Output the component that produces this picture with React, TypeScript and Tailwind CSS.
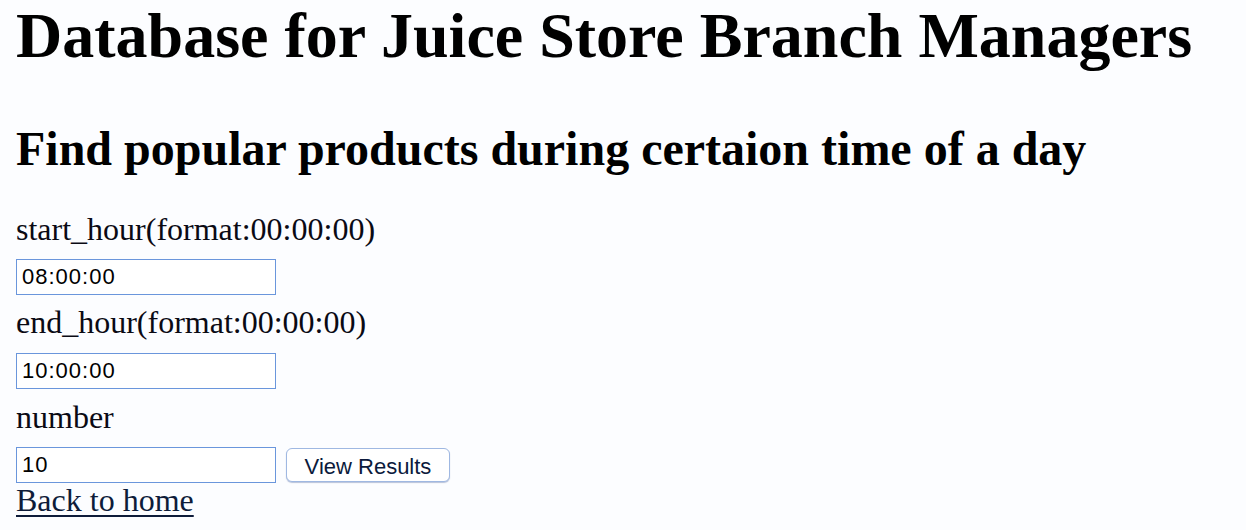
export default function App() {
  const serif = "font-['Liberation_Serif','Times_New_Roman',serif]";
  const sans = "font-['Liberation_Sans',Arial,sans-serif]";
  const field = `h-[36px] w-[260px] border border-[#6a96dc] bg-white px-[5px] text-[22px] tracking-[1px] text-black outline-none ${sans}`;

  return (
    <div className={`min-h-[530px] bg-[#fcfdff] px-4 text-black ${serif}`}>
      <h1 className="text-[64px] font-bold leading-[71px]">Database for Juice Store Branch Managers</h1>
      <h2 className="mt-[50px] text-[48px] font-bold leading-[56px]">Find popular products during certaion time of a day</h2>

      <form className="mt-[34px] flex flex-col items-start text-[32px] leading-[36px] text-[#0a0a14]">
        <label>start_hour(format:00:00:00)</label>
        <input defaultValue="08:00:00" className={`mt-[12px] ${field}`} />
        <label className="mt-[9px]">end_hour(format:00:00:00)</label>
        <input defaultValue="10:00:00" className={`mt-[13px] ${field}`} />
        <label className="mt-[10px]">number</label>
        <div className="mt-[12px] flex items-center">
          <input defaultValue="10" className={field} />
          <button
            type="button"
            className={`ml-[10px] h-[34px] w-[164px] rounded-[6px] border border-[#9fb8e2] bg-white text-[22px] text-[#0b1a3c] shadow-[0_1px_1px_rgba(60,90,150,0.35)] ${sans}`}
          >
            View Results
          </button>
        </div>
        <a href="#" className="leading-[34px] text-[#0e1c3a] underline decoration-2 underline-offset-[4px]">
          Back to home
        </a>
      </form>
    </div>
  );
}
